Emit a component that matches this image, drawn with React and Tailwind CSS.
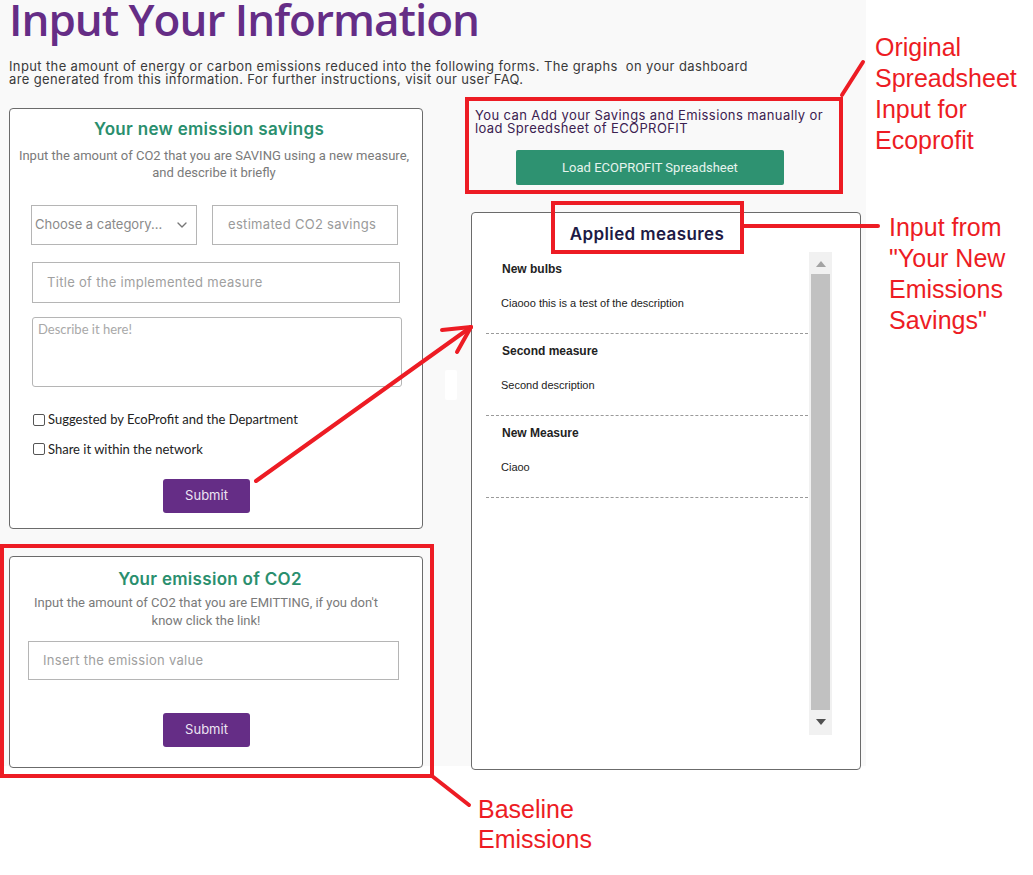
import React from 'react';
import { ChevronDown } from 'lucide-react';

const measures = [
  { title: 'New bulbs', desc: 'Ciaooo this is a test of the description' },
  { title: 'Second measure', desc: 'Second description' },
  { title: 'New Measure', desc: 'Ciaoo' },
];

const SubmitButton = ({ offset }) => (
  <button className={`${offset} w-[87px] h-[34px] rounded-[3px] bg-[#652d86] text-[13px] text-[#ece4f2] font-['Inter',sans-serif]`}>
    Submit
  </button>
);

const SavingsCard = () => (
  <div className="w-[414px] h-[421px] bg-white border border-[#6b6b6b] rounded-[4px] pt-[9px]">
    <h2 className="text-center -ml-[14px] text-[17px] font-semibold tracking-[0.3px] text-[#2a8f6e] leading-[22px] font-['Inter',sans-serif]">
      Your new emission savings
    </h2>
    <p className="mt-[7px] text-center -ml-[4px] text-[13px] leading-[17px] text-[#7a7a7a] font-['Roboto',sans-serif]">
      Input the amount of CO2 that you are SAVING using a new measure,<br />and describe it briefly
    </p>
    <div className="pl-[21px] pr-[24px] mt-[24px]">
      <div className="flex gap-[15px]">
        <div className="w-[167px] h-[40px] border border-[#b5b5b5] flex items-center justify-between pl-[3px] pr-[6px]">
          <span className="text-[13px] text-[#8a8a8a] font-['Inter',sans-serif]">Choose a category...</span>
          <ChevronDown className="w-4 h-4 text-[#777]" strokeWidth={2} />
        </div>
        <div className="w-[187px] h-[40px] border border-[#b5b5b5] flex items-center pl-[15px] text-[13px] tracking-[0.3px] text-[#9a9a9a] font-['Inter',sans-serif]">
          estimated CO2 savings
        </div>
      </div>
      <div className="mt-[17px] ml-[1px] w-[368px] h-[41px] border border-[#b5b5b5] flex items-center pl-[14px] text-[13px] tracking-[0.3px] text-[#a0a0a0] font-['Inter',sans-serif]">
        Title of the implemented measure
      </div>
      <div className="mt-[14px] ml-[1px] w-[370px] h-[70px] border border-[#b5b5b5] rounded-[3px] pl-[5px] pt-[2px] text-[13px] text-[#a8a8a8] font-['Lato',sans-serif]">
        Describe it here!
      </div>
      <label className="mt-[23px] ml-[2px] flex items-center gap-[3px] text-[13px] text-[#222] font-['Lato',sans-serif]">
        <span className="w-[12px] h-[12px] border border-[#555] rounded-[2px] bg-white" />
        Suggested by EcoProfit and the Department
      </label>
      <label className="mt-[10px] ml-[2px] flex items-center gap-[3px] text-[13px] text-[#222] font-['Lato',sans-serif]">
        <span className="w-[12px] h-[12px] border border-[#555] rounded-[2px] bg-white" />
        Share it within the network
      </label>
      <div className="mt-[20px]">
        <SubmitButton offset="ml-[132px]" />
      </div>
    </div>
  </div>
);

const EmissionCard = () => (
  <div className="w-[414px] h-[212px] bg-white border border-[#6b6b6b] rounded-[4px] pt-[11px]">
    <h2 className="text-center -ml-[12px] text-[17px] font-semibold tracking-[0.3px] text-[#2a8f6e] leading-[22px] font-['Inter',sans-serif]">
      Your emission of CO2
    </h2>
    <p className="mt-[4px] text-center -ml-[20px] text-[13px] leading-[18px] text-[#7a7a7a] font-['Roboto',sans-serif]">
      Input the amount of CO2 that you are EMITTING, if you don't<br />know click the link!
    </p>
    <div className="pl-[18px] mt-[11px]">
      <div className="w-[371px] h-[39px] border border-[#b5b5b5] flex items-center pl-[14px] text-[13px] tracking-[0.3px] text-[#a0a0a0] font-['Inter',sans-serif]">
        Insert the emission value
      </div>
      <div className="mt-[33px]">
        <SubmitButton offset="ml-[135px]" />
      </div>
    </div>
  </div>
);

const AppliedMeasures = () => (
  <div className="mt-[27px] w-[390px] h-[558px] bg-white border border-[#6b6b6b] rounded-[4px] pt-[10px]">
    <h2 className="text-center -ml-[38px] text-[17px] font-semibold tracking-[0.4px] text-[#1d1a45] leading-[22px] font-['Inter',sans-serif]">
      Applied measures
    </h2>
    <div className="mt-[7px] ml-[14px] flex h-[483px]">
      <div className="w-[322px]">
        {measures.map((m) => (
          <div key={m.title} className="h-[82px] border-b border-dashed border-[#9a9a9a] pl-[16px] pt-[10px] font-['Liberation_Sans',Arial,sans-serif]">
            <div className="text-[12px] font-bold text-[#222] leading-[14px]">{m.title}</div>
            <div className="mt-[20px] -ml-[1px] text-[11px] text-[#222] leading-[14px]">{m.desc}</div>
          </div>
        ))}
      </div>
      <div className="ml-[1px] w-[23px] h-full bg-[#f1f1f1] flex flex-col items-center">
        <div className="mt-[9px] w-0 h-0 border-l-[5px] border-r-[5px] border-b-[6px] border-l-transparent border-r-transparent border-b-[#a3a3a3]" />
        <div className="mt-[7px] w-[19px] h-[436px] bg-[#c1c1c1]" />
        <div className="mt-[9px] w-0 h-0 border-l-[5px] border-r-[5px] border-t-[6px] border-l-transparent border-r-transparent border-t-[#505050]" />
      </div>
    </div>
  </div>
);

export default function App() {
  return (
    <div className="relative w-[1033px] h-[875px] bg-white overflow-hidden">
      <div className="w-[866px] h-[770px] bg-[#f9f9f9] pl-[9px]">
        <h1 className="-mt-[4px] text-[44px] leading-[47px] tracking-[-1px] font-semibold text-[#652d86] font-['Open_Sans',sans-serif]">
          Input Your Information
        </h1>
        <p className="mt-[17px] text-[13px] leading-[13px] tracking-[0.37px] text-[#3a3a3a] font-['Inter',sans-serif]">
          Input the amount of energy or carbon emissions reduced into the following forms. The graphs&nbsp; on your dashboard<br />
          are generated from this information. For further instructions, visit our user FAQ.
        </p>
        <div className="mt-[22px] flex gap-[48px]">
          <div className="flex flex-col gap-[27px]">
            <SavingsCard />
            <EmissionCard />
          </div>
          <div>
            <p className="pl-[4px] pt-[1px] text-[13px] leading-[13px] tracking-[0.4px] text-[#3b2150] font-['Inter',sans-serif]">
              You can Add your Savings and Emissions manually or<br />load Spreedsheet of ECOPROFIT
            </p>
            <button className="mt-[15px] ml-[45px] w-[268px] h-[35px] rounded-[2px] bg-[#2e9271] text-[13px] text-[#e6f4ee] font-['Roboto',sans-serif]">
              Load ECOPROFIT Spreadsheet
            </button>
            <AppliedMeasures />
          </div>
        </div>
      </div>

      {/* annotations */}
      <div className="absolute left-[445px] top-[370px] w-[12px] h-[30px] bg-white rounded-[2px]" />
      <div className="absolute left-[465px] top-[97px] w-[378px] h-[97px] border-[4px] border-[#ed1c24]" />
      <div className="absolute left-[551px] top-[201px] w-[193px] h-[53px] border-[4px] border-[#ed1c24]" />
      <div className="absolute left-0 top-[544px] w-[434px] h-[234px] border-[4px] border-[#ed1c24]" />
      <svg className="absolute inset-0 pointer-events-none" width="1033" height="875">
        <g stroke="#ed1c24" strokeWidth="4" fill="none" strokeLinecap="round">
          <line x1="842" y1="95" x2="863" y2="62" />
          <line x1="744" y1="226" x2="878" y2="226" />
          <line x1="432" y1="776" x2="469" y2="805" />
          <line x1="256" y1="481" x2="471" y2="327" />
          <line x1="442" y1="330" x2="471" y2="327" />
          <line x1="457" y1="352" x2="471" y2="327" />
        </g>
      </svg>
      <div className="absolute left-[875px] top-[32px] text-[25px] leading-[31px] text-[#ed1c24] font-['Liberation_Sans',Arial,sans-serif]">
        Original<br />Spreadsheet<br />Input for<br />Ecoprofit
      </div>
      <div className="absolute left-[889px] top-[212px] text-[25px] leading-[31px] text-[#ed1c24] font-['Liberation_Sans',Arial,sans-serif]">
        Input from<br />"Your New<br />Emissions<br />Savings"
      </div>
      <div className="absolute left-[478px] top-[794px] text-[25px] leading-[30px] text-[#ed1c24] font-['Liberation_Sans',Arial,sans-serif]">
        Baseline<br />Emissions
      </div>
    </div>
  );
}
